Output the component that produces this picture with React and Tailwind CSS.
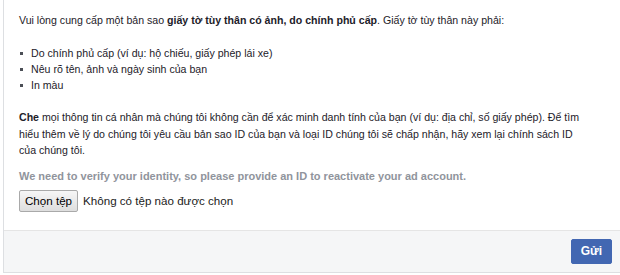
const bullets = [
  'Do chính phủ cấp (ví dụ: hộ chiếu, giấy phép lái xe)',
  'Nêu rõ tên, ảnh và ngày sinh của bạn',
  'In màu',
];

const App = () => {
  return (
    <div className="w-[620px] h-[275px] bg-white overflow-hidden font-['Liberation_Sans',Arial,sans-serif] text-[10.6px] text-[#1d2129]">
      <div className="ml-[3px] -mt-px w-[620px] border border-[#dddfe2] bg-white">
        {/* Body */}
        <div className="pl-[15px] pr-[24px] pt-[12px] pb-[18px]">
          <p className="leading-[16px] mb-[17px]">
            Vui lòng cung cấp một bản sao <b>giấy tờ tùy thân có ảnh, do chính phủ cấp</b>. Giấy tờ tùy thân này phải:
          </p>

          <ul className="mb-[16px]">
            {bullets.map((item) => (
              <li key={item} className="flex items-center leading-[16px]">
                <span className="w-[3px] h-[3px] bg-[#4b4f56] ml-[1px] mr-[8px]"></span>
                {item}
              </li>
            ))}
          </ul>

          <p className="leading-[16.5px] mb-[8px]">
            <b>Che</b> mọi thông tin cá nhân mà chúng tôi không cần để xác minh danh tính của bạn (ví dụ: địa chỉ, số giấy phép). Để tìm hiểu thêm về lý do chúng tôi yêu cầu bản sao ID của bạn và loại ID chúng tôi sẽ chấp nhận, hãy xem lại chính sách ID
            <br />
            của chúng tôi.
          </p>

          <p className="text-[11px] font-bold text-[#90949c] leading-[18px] mb-[5px]">
            We need to verify your identity, so please provide an ID to reactivate your ad account.
          </p>

          <div className="flex items-center gap-[5px]">
            <span className="h-[22px] px-[5px] flex items-center border border-[#a9a9a9] rounded-[2px] bg-gradient-to-b from-[#f6f6f6] to-[#dedede] text-[11.6px] text-black">
              Chọn tệp
            </span>
            <span className="text-[11.6px] text-[#222]">Không có tệp nào được chọn</span>
          </div>
        </div>

        {/* Footer */}
        <div className="h-[42px] border-t border-[#e5e5e5] bg-[#f5f6f7] flex items-center justify-end pr-[10px]">
          <button className="h-[25px] px-[9px] bg-[#4267b2] border border-[#4267b2] rounded-[2px] text-white text-[12px] font-bold">
            Gửi
          </button>
        </div>
      </div>
    </div>
  );
};

export default App;
